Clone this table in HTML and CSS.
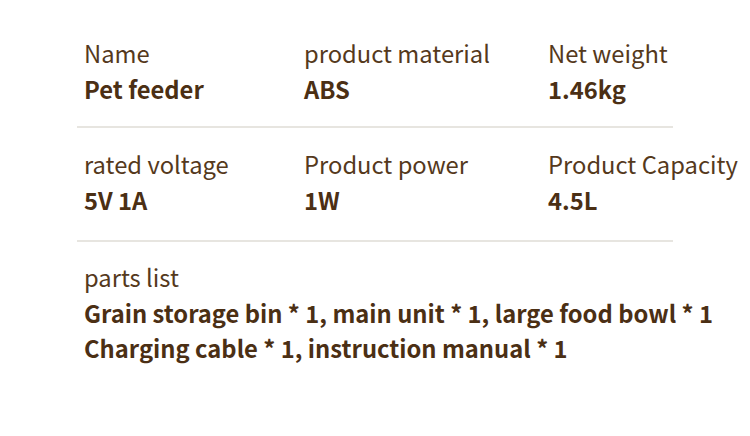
FILE: index.html
```html
<!DOCTYPE html>
<html>
<head>
<meta charset="utf-8">
<link rel="stylesheet" href="styles.css">
</head>
<body>
<div class="sheet">
  <div class="row row-first">
    <div class="cell"><div class="label">Name</div><div class="value">Pet feeder</div></div>
    <div class="cell"><div class="label">product material</div><div class="value">ABS</div></div>
    <div class="cell"><div class="label">Net weight</div><div class="value">1.46kg</div></div>
  </div>
  <div class="row row-second">
    <div class="cell"><div class="label">rated voltage</div><div class="value">5V 1A</div></div>
    <div class="cell"><div class="label">Product power</div><div class="value">1W</div></div>
    <div class="cell"><div class="label">Product Capacity</div><div class="value">4.5L</div></div>
  </div>
  <div class="parts">
    <div class="label">parts list</div>
    <div class="value parts-line">Grain storage bin * 1, main unit * 1, large food bowl * 1</div>
    <div class="value parts-line">Charging cable * 1, instruction manual * 1</div>
  </div>
</div>
</body>
</html>
```
FILE: styles.css
```css
html, body {
  margin: 0;
  padding: 0;
  background: #ffffff;
}
body {
  font-family: "Noto Sans CJK SC", "Source Sans Pro", "Noto Sans", sans-serif;
  color: #4b2f14;
  width: 750px;
  height: 436px;
  overflow: hidden;
}
.sheet {
  margin-left: 77px;
  width: 596px;
}
.row {
  display: grid;
  grid-template-columns: 220px 244px 1fr;
  border-bottom: 2px solid #e7e5e0;
}
.row-first {
  padding: 35px 0 19px;
}
.row-second {
  padding: 18px 0 22px;
}
.cell {
  padding-left: 7px;
  white-space: nowrap;
}
.label {
  font-size: 23.75px;
  line-height: 36px;
  font-weight: 400;
  color: #55391c;
  white-space: nowrap;
}
.value {
  font-size: 23.75px;
  line-height: 36px;
  font-weight: 700;
  color: #4b2f14;
  white-space: nowrap;
}
.parts {
  padding: 17px 0 0 7px;
}
.parts-line {
  line-height: 35px;
}
```
